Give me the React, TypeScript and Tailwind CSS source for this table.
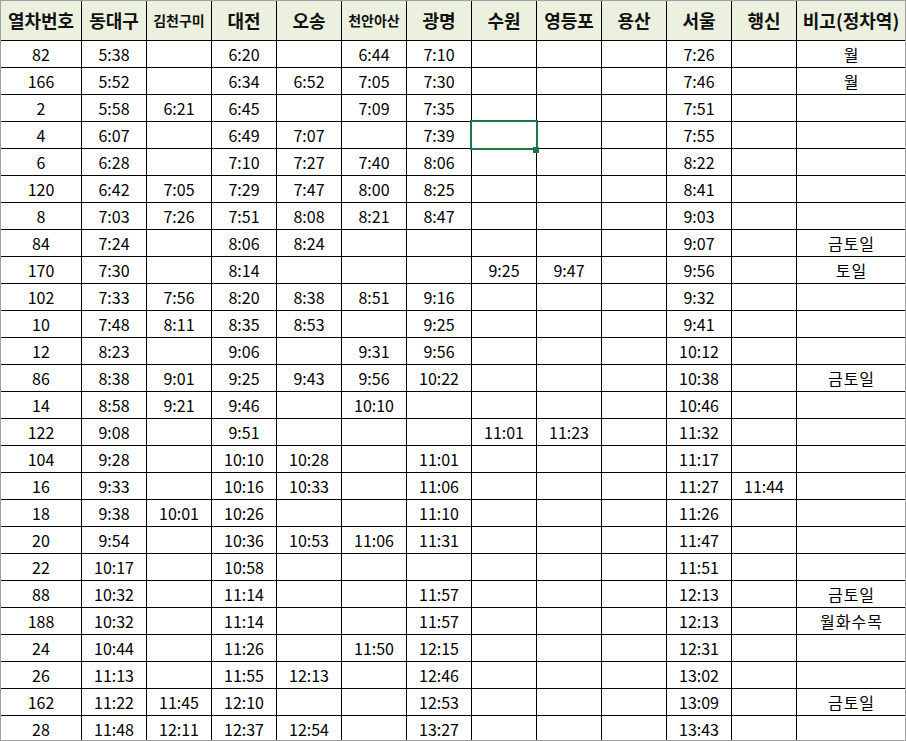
import React from 'react';

const headers = [
  '열차번호',
  '동대구',
  '김천구미',
  '대전',
  '오송',
  '천안아산',
  '광명',
  '수원',
  '영등포',
  '용산',
  '서울',
  '행신',
  '비고(정차역)',
];

// 열차번호, 동대구, 김천구미, 대전, 오송, 천안아산, 광명, 수원, 영등포, 용산, 서울, 행신, 비고
const rows: string[][] = [
  ['82', '5:38', '', '6:20', '', '6:44', '7:10', '', '', '', '7:26', '', '월'],
  ['166', '5:52', '', '6:34', '6:52', '7:05', '7:30', '', '', '', '7:46', '', '월'],
  ['2', '5:58', '6:21', '6:45', '', '7:09', '7:35', '', '', '', '7:51', '', ''],
  ['4', '6:07', '', '6:49', '7:07', '', '7:39', '', '', '', '7:55', '', ''],
  ['6', '6:28', '', '7:10', '7:27', '7:40', '8:06', '', '', '', '8:22', '', ''],
  ['120', '6:42', '7:05', '7:29', '7:47', '8:00', '8:25', '', '', '', '8:41', '', ''],
  ['8', '7:03', '7:26', '7:51', '8:08', '8:21', '8:47', '', '', '', '9:03', '', ''],
  ['84', '7:24', '', '8:06', '8:24', '', '', '', '', '', '9:07', '', '금토일'],
  ['170', '7:30', '', '8:14', '', '', '', '9:25', '9:47', '', '9:56', '', '토일'],
  ['102', '7:33', '7:56', '8:20', '8:38', '8:51', '9:16', '', '', '', '9:32', '', ''],
  ['10', '7:48', '8:11', '8:35', '8:53', '', '9:25', '', '', '', '9:41', '', ''],
  ['12', '8:23', '', '9:06', '', '9:31', '9:56', '', '', '', '10:12', '', ''],
  ['86', '8:38', '9:01', '9:25', '9:43', '9:56', '10:22', '', '', '', '10:38', '', '금토일'],
  ['14', '8:58', '9:21', '9:46', '', '10:10', '', '', '', '', '10:46', '', ''],
  ['122', '9:08', '', '9:51', '', '', '', '11:01', '11:23', '', '11:32', '', ''],
  ['104', '9:28', '', '10:10', '10:28', '', '11:01', '', '', '', '11:17', '', ''],
  ['16', '9:33', '', '10:16', '10:33', '', '11:06', '', '', '', '11:27', '11:44', ''],
  ['18', '9:38', '10:01', '10:26', '', '', '11:10', '', '', '', '11:26', '', ''],
  ['20', '9:54', '', '10:36', '10:53', '11:06', '11:31', '', '', '', '11:47', '', ''],
  ['22', '10:17', '', '10:58', '', '', '', '', '', '', '11:51', '', ''],
  ['88', '10:32', '', '11:14', '', '', '11:57', '', '', '', '12:13', '', '금토일'],
  ['188', '10:32', '', '11:14', '', '', '11:57', '', '', '', '12:13', '', '월화수목'],
  ['24', '10:44', '', '11:26', '', '11:50', '12:15', '', '', '', '12:31', '', ''],
  ['26', '11:13', '', '11:55', '12:13', '', '12:46', '', '', '', '13:02', '', ''],
  ['162', '11:22', '11:45', '12:10', '', '', '12:53', '', '', '', '13:09', '', '금토일'],
  ['28', '11:48', '12:11', '12:37', '12:54', '', '13:27', '', '', '', '13:43', '', ''],
];

export default function App() {
  return (
    <div className="w-[906px] h-[741px] overflow-hidden border border-[#a0a0a0] bg-white font-['Noto_Sans_CJK_KR','Malgun_Gothic',sans-serif] text-black">
      <div className="grid grid-cols-[80px_repeat(11,64px)_108px] gap-px bg-black">
        {/* 헤더 */}
        {headers.map((h) => {
          const small = h === '김천구미' || h === '천안아산';
          return (
            <div
              key={h}
              className={`h-[39px] bg-[#ebf1de] flex items-center justify-center font-bold text-[#111] whitespace-nowrap ${
                small ? 'text-[14px]' : 'text-[18px]'
              }`}
            >
              {h}
            </div>
          );
        })}

        {/* 데이터 */}
        {rows.map((row, ri) =>
          row.map((cell, ci) => {
            const selected = ri === 3 && ci === 7;
            const note = ci === 12;
            return (
              <div
                key={`${ri}-${ci}`}
                className={`h-[26px] bg-white flex items-center justify-center text-[16px] leading-none whitespace-nowrap ${
                  note ? 'tracking-[1px] pl-[1px]' : ''
                } ${selected ? 'relative z-10' : ''}`}
              >
                {cell}
                {selected && (
                  <>
                    <div className="absolute -left-[2px] -top-[2px] -right-[2px] -bottom-[2px] border-2 border-[#217346]" />
                    <div className="absolute left-[61px] top-[25px] w-[6px] h-[6px] bg-[#217346]" />
                  </>
                )}
              </div>
            );
          })
        )}
      </div>
    </div>
  );
}
